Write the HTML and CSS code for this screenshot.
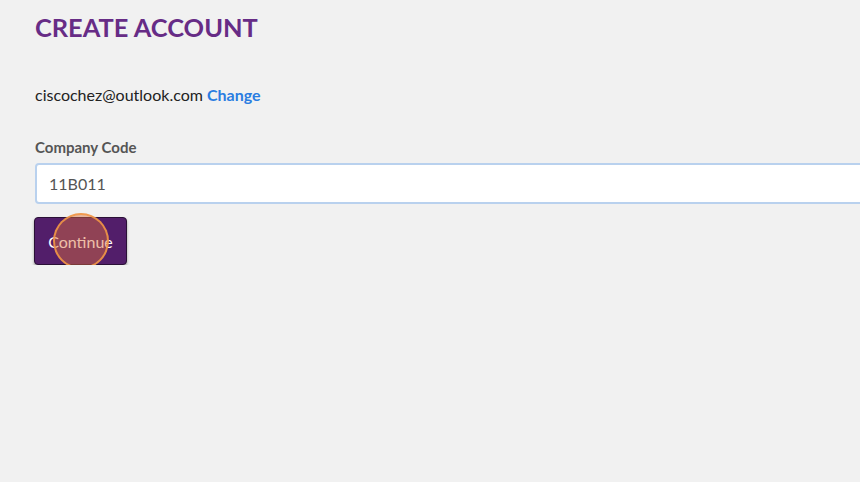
FILE: index.html
```html
<!DOCTYPE html>
<html>
<head>
<meta charset="utf-8">
<link rel="stylesheet" href="styles.css">
</head>
<body>
<main class="page">
  <h1 class="title">CREATE ACCOUNT</h1>
  <p class="email">ciscochez@outlook.com <a class="change" href="#">Change</a></p>
  <label class="label" for="code">Company Code</label>
  <input class="input" id="code" type="text" value="11B011">
  <div class="actions">
    <button class="btn">Continue<span class="click"></span></button>
  </div>
</main>
</body>
</html>
```
FILE: styles.css
```css
html, body {
  margin: 0;
  padding: 0;
  background: #f1f1f1;
  font-family: Lato, "Open Sans", sans-serif;
  overflow: hidden;
}
.page {
  padding: 10px 0 0 35px;
  display: flex;
  flex-direction: column;
  align-items: flex-start;
}
.title {
  margin: 0;
  font-size: 25.4px;
  font-weight: 700;
  color: #672c86;
  letter-spacing: 0;
  line-height: 34px;
}
.email {
  margin: 41px 0 0;
  font-size: 16px;
  line-height: 20px;
  color: #222;
}
.change {
  color: #2a7de1;
  font-weight: 700;
  text-decoration: none;
}
.label {
  margin-top: 33px;
  font-size: 15px;
  font-weight: 700;
  color: #555;
  line-height: 18px;
}
.input {
  margin-top: 7px;
  box-sizing: border-box;
  width: 860px;
  height: 41px;
  border: 2px solid #b9d1ee;
  border-radius: 4px;
  background: #fff;
  padding: 0 12px;
  font-family: Lato, sans-serif;
  font-size: 16px;
  color: #555;
  outline: none;
}
.actions {
  margin-top: 13px;
  margin-left: -1px;
}
.btn {
  position: relative;
  width: 93px;
  height: 48px;
  background: #521e6a;
  border: 1px solid #2a1036;
  border-radius: 4px;
  box-shadow: 0 2px 3px rgba(0,0,0,0.35);
  color: #fff;
  font-family: Lato, sans-serif;
  font-size: 16px;
  padding: 0;
}
.click {
  position: absolute;
  left: 18px;
  top: -5px;
  width: 52px;
  height: 52px;
  border-radius: 50%;
  border: 2px solid rgba(240,150,70,0.9);
  background: rgba(220,110,60,0.45);
}
```
